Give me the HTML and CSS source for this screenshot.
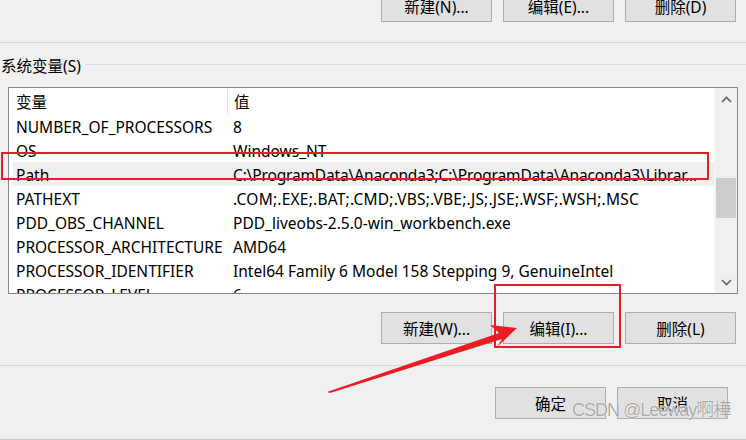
FILE: index.html
```html
<!DOCTYPE html>
<html lang="zh-CN">
<head>
<meta charset="utf-8">
<title>系统变量</title>
<link rel="stylesheet" href="styles.css">
</head>
<body>
<div class="dialog">
  <div class="btn-row top-row">
    <button class="btn">新建(N)...</button>
    <button class="btn">编辑(E)...</button>
    <button class="btn">删除(D)</button>
  </div>
  <div class="sep sep-a"></div>
  <div class="group-title"><span class="gt-text">系统变量(S)</span><span class="gt-line"></span></div>
  <div class="listbox">
    <div class="list">
      <div class="row head"><div class="c1">变量</div><div class="c2">值</div></div>
      <div class="row"><div class="c1">NUMBER_OF_PROCESSORS</div><div class="c2">8</div></div>
      <div class="row"><div class="c1">OS</div><div class="c2">Windows_NT</div></div>
      <div class="row selected"><div class="c1">Path</div><div class="c2 tight">C:\ProgramData\Anaconda3;C:\ProgramData\Anaconda3\Librar...</div></div>
      <div class="row"><div class="c1">PATHEXT</div><div class="c2 loose">.COM;.EXE;.BAT;.CMD;.VBS;.VBE;.JS;.JSE;.WSF;.WSH;.MSC</div></div>
      <div class="row"><div class="c1">PDD_OBS_CHANNEL</div><div class="c2">PDD_liveobs-2.5.0-win_workbench.exe</div></div>
      <div class="row"><div class="c1">PROCESSOR_ARCHITECTURE</div><div class="c2">AMD64</div></div>
      <div class="row"><div class="c1">PROCESSOR_IDENTIFIER</div><div class="c2">Intel64 Family 6 Model 158 Stepping 9, GenuineIntel</div></div>
      <div class="row"><div class="c1">PROCESSOR_LEVEL</div><div class="c2">6</div></div>
    </div>
    <div class="scrollbar">
      <div class="sb-btn"><svg width="11" height="7" viewBox="0 0 11 7"><polyline points="1,6 5.5,1.5 10,6" fill="none" stroke="#606060" stroke-width="1.6"/></svg></div>
      <div class="sb-track"><div class="sb-thumb"></div></div>
      <div class="sb-btn"><svg width="11" height="7" viewBox="0 0 11 7"><polyline points="1,1 5.5,5.5 10,1" fill="none" stroke="#606060" stroke-width="1.6"/></svg></div>
    </div>
  </div>
  <div class="btn-row mid-row">
    <button class="btn">新建(W)...</button>
    <button class="btn">编辑(I)...</button>
    <button class="btn">删除(L)</button>
  </div>
  <div class="sep sep-b"></div>
  <div class="btn-row bottom-row">
    <button class="btn">确定</button>
    <button class="btn">取消</button>
  </div>
  <div class="sep sep-c"></div>

  <div class="mark mark-path"></div>
  <div class="mark mark-edit"></div>
  <svg class="arrow" width="746" height="440" viewBox="0 0 746 440">
    <polygon points="327,402 499,343 490,335 517,338 497,357 502,349 330,403" fill="#ec1c24"/>
  </svg>
  <div class="watermark">CSDN @Leeway啊樺</div>
</div>
</body>
</html>
```
FILE: styles.css
```css
* { box-sizing: border-box; }
html, body { margin: 0; padding: 0; }
body {
  background: #f0f0f0;
  font-family: "Noto Sans", "Noto Sans CJK SC", sans-serif;
  font-size: 15.5px;
  color: #000;
  width: 746px;
  height: 440px;
  overflow: hidden;
}
.dialog { position: relative; width: 746px; height: 440px; }

.btn-row { display: flex; justify-content: flex-end; gap: 11px; padding-right: 10px; }
.top-row { margin-top: -10px; gap: 11px; }
.btn {
  width: 111px;
  height: 32px;
  background: #e1e1e1;
  border: 1px solid #adadad;
  font: inherit;
  color: #000;
  padding: 0;
  display: flex;
  align-items: center;
  justify-content: center;
}
.sep { height: 1px; background: #d8d8d8; }
.sep-a { margin-top: 20px; }
.group-title { display: flex; align-items: center; height: 20px; margin-top: 13px; }
.gt-text { padding-left: 1px; line-height: 20px; }
.gt-line { flex: 1; height: 1px; background: #dcdcdc; margin-left: 5px; margin-top: -4px; }

.listbox {
  margin: 11px 0 0 8px;
  width: 730px;
  height: 207px;
  border: 1px solid #828790;
  background: #fff;
  display: flex;
  overflow: hidden;
}
.list { flex: 1; overflow: hidden; }
.row { display: flex; height: 24px; align-items: center; margin-left: 4px; white-space: nowrap; padding-top: 2px; }
.row.head { height: 26px; margin-left: 0; padding-left: 4px; padding-top: 0; }
.c1 { width: 214px; padding-left: 3px; }
.c2 { padding-left: 6px; }
.c2.tight { letter-spacing: -0.15px; }
.c2.loose { letter-spacing: 0.22px; }
.head .c2 { border-left: 1px solid #e5e5e5; height: 26px; display: flex; align-items: center; }
.row.selected { background: #efefef; }

.scrollbar { width: 23px; background: #f0f0f0; display: flex; flex-direction: column; border-left: 1px solid #f7f7f7; }
.sb-btn { height: 22px; display: flex; align-items: center; justify-content: center; }
.sb-track { flex: 1; padding-top: 68px; }
.sb-thumb { margin: 0 1px 0 1px; height: 40px; background: #cdcdcd; }

.mid-row { margin-top: 18px; }
.sep-b { margin-top: 21px; }
.bottom-row { margin-top: 21px; padding-right: 18px; }
.sep-c { margin-top: 20px; background: #c8c8c8; }

.mark { position: absolute; border: 2px solid #e81d25; }
.mark-path { left: 1px; top: 162px; width: 708px; height: 28px; }
.mark-edit { left: 494px; top: 294px; width: 127px; height: 64px; }
.arrow { position: absolute; left: 0; top: 0; pointer-events: none; }
.watermark {
  position: absolute;
  left: 572px;
  top: 410px;
  font-family: "Liberation Sans", "Noto Sans CJK SC", sans-serif;
  font-size: 18px;
  line-height: 20px;
  letter-spacing: -1px;
  color: rgba(120,120,120,0.65);
  text-shadow: 0 0 1px #fff, 0 0 1px #fff;
  white-space: nowrap;
}
```
